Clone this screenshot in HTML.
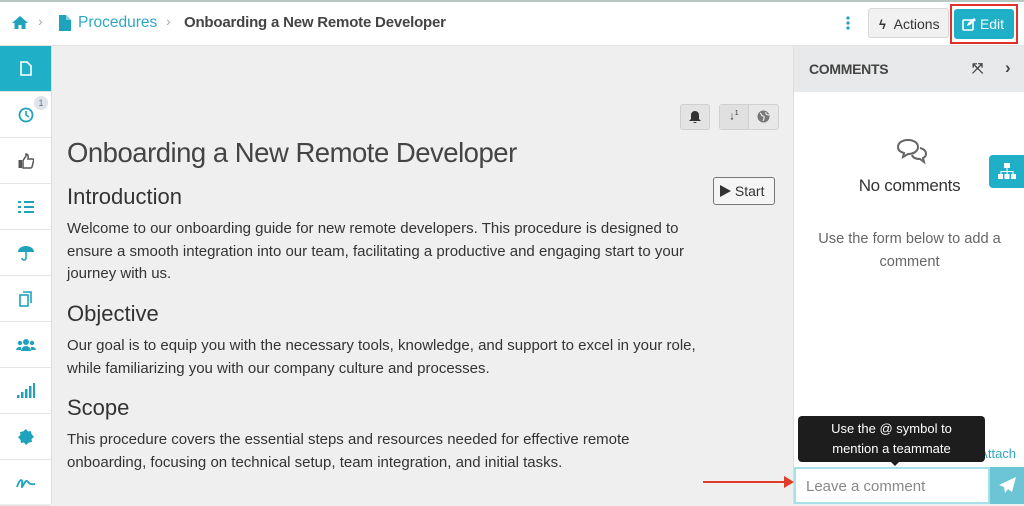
<!DOCTYPE html>
<html><head><meta charset="utf-8"><style>
*{margin:0;padding:0;box-sizing:border-box}
body{width:1024px;height:504px;overflow:hidden;background:#efefef;font-family:"Liberation Sans",sans-serif;color:#444;position:relative}
.top{position:absolute;left:0;top:0;width:1024px;height:46px;background:#fff;border-top:2px solid #b9c9c2;border-bottom:1px solid #e2e2e2}
.side{position:absolute;left:0;top:46px;width:52px;height:458px;background:#fff;border-right:1px solid #ddd}
.side div{height:46px;border-bottom:1px solid #e4e4e4;display:flex;align-items:center;justify-content:center;position:relative}
.side div.act{background:#1fb0c8}
.c{position:absolute;left:793px;top:46px;width:231px;height:458px;background:#fff;border-left:1px solid #ddd}
.ch{height:46px;background:#e8e9ea;display:flex;align-items:center;padding-left:15px;font-size:14px;font-weight:bold;color:#444;letter-spacing:-0.3px}
p{font-size:15px;line-height:22.5px;color:#333}
h2{font-weight:normal;font-size:22px;color:#333;position:absolute;left:67px}
</style></head><body>
<div class="top">
 <svg style="position:absolute;left:11px;top:13px" width="18" height="15" viewBox="0 0 18 15"><path d="M9 1L1 8h2.5v6h4v-4h3v4h4V8H17z" fill="#1fa3bd"/></svg>
 <span style="position:absolute;left:38px;top:11px;color:#aaa;font-size:14px">›</span>
 <svg style="position:absolute;left:59px;top:13px" width="12" height="16" viewBox="0 0 12 16"><path d="M0 0h7l5 5v11H0z" fill="#1fa3bd"/><path d="M7 0v5h5" fill="#7fd0df"/></svg>
 <span style="position:absolute;left:78px;top:12px;font-size:15.5px;color:#2fa8c2">Procedures</span>
 <span style="position:absolute;left:166px;top:11px;color:#aaa;font-size:14px">›</span>
 <span style="position:absolute;left:184px;top:12px;font-size:15px;font-weight:bold;color:#444;letter-spacing:-0.2px">Onboarding a New Remote Developer</span>
 <svg style="position:absolute;left:846px;top:14px" width="4" height="14"><circle cx="2" cy="2" r="1.6" fill="#1fa3bd"/><circle cx="2" cy="7" r="1.6" fill="#1fa3bd"/><circle cx="2" cy="12" r="1.6" fill="#1fa3bd"/></svg>
 <div style="position:absolute;left:868px;top:6px;width:81px;height:30px;background:#f1f1f1;border:1px solid #d8d8d8;border-radius:3px;font-size:14px;color:#333;padding:7px 0 0 10px"><b style="font-size:13px">ϟ</b>&nbsp; Actions</div>
 <div style="position:absolute;left:950px;top:2px;width:68px;height:40px;border:2px solid #e0302a"></div>
 <div style="position:absolute;left:954px;top:7px;width:60px;height:30px;background:#1fb0c8;border-radius:3px;color:#fff;font-size:14px;padding:7px 0 0 8px">
 <svg width="14" height="13" viewBox="0 0 14 13" style="vertical-align:-2px"><rect x="1" y="2" width="10" height="10" rx="1" fill="none" stroke="#fff" stroke-width="1.6"/><path d="M5 8l1-3 6-5 2 2-6 5z" fill="#fff"/></svg> Edit</div>
</div>
<div class="side">
 <div class="act"><svg width="12" height="15"><path d="M1 1h6l4 4v9H1z" fill="none" stroke="#fff" stroke-width="1.6"/></svg></div>
 <div><svg width="16" height="16"><circle cx="8" cy="8" r="6.5" fill="none" stroke="#1fa3bd" stroke-width="1.8"/><path d="M8 4v4l3 2" fill="none" stroke="#1fa3bd" stroke-width="1.6"/></svg><span style="position:absolute;left:34px;top:4px;width:14px;height:14px;border-radius:7px;background:#dde4ea;font-size:9px;color:#678;text-align:center;line-height:14px">1</span></div>
 <div><svg width="16" height="16" viewBox="0 0 16 16"><rect x="0.5" y="7" width="3.5" height="8" fill="#555"/><path d="M5 7.5l3-4.5V1c2 0 2.5 2 2 5h4.5c1 0 1.5 1 1 2l-1.5 6c-.3.7-.8 1-1.5 1H5z" fill="none" stroke="#555" stroke-width="1.5"/></svg></div>
 <div><svg width="16" height="14"><g fill="#1fa3bd"><rect x="6" y="1" width="10" height="2"/><rect x="6" y="6" width="10" height="2"/><rect x="6" y="11" width="10" height="2"/><rect x="0" y="1" width="3" height="2"/><rect x="0" y="6" width="3" height="2"/><rect x="0" y="11" width="3" height="2"/></g></svg></div>
 <div><svg width="18" height="16"><path d="M1 7a8 6 0 0 1 16 0z" fill="#1fa3bd"/><path d="M9 7v6a2 2 0 0 1-4 0" fill="none" stroke="#1fa3bd" stroke-width="1.6"/></svg></div>
 <div><svg width="14" height="16"><rect x="1" y="4" width="8" height="11" fill="none" stroke="#1fa3bd" stroke-width="1.6"/><path d="M4 1h8v11" fill="none" stroke="#1fa3bd" stroke-width="1.6"/></svg></div>
 <div><svg width="20" height="14"><g fill="#1fa3bd"><circle cx="10" cy="4" r="3"/><circle cx="4" cy="5" r="2.2"/><circle cx="16" cy="5" r="2.2"/><path d="M5 13a5 5 0 0 1 10 0z"/><path d="M0 12a4 4 0 0 1 5-3v3z"/><path d="M20 12a4 4 0 0 0-5-3v3z"/></g></svg></div>
 <div><svg width="18" height="16"><g fill="#1fa3bd"><rect x="0" y="12" width="2.5" height="3"/><rect x="4" y="9" width="2.5" height="6"/><rect x="8" y="6" width="2.5" height="9"/><rect x="12" y="3" width="2.5" height="12"/><rect x="16" y="0" width="2" height="15"/></g></svg></div>
 <div><svg width="16" height="16"><path d="M8 0l2 2.5 3-.5.5 3L16 8l-2.5 2 .5 3-3 .5L8 16l-2-2.5-3 .5-.5-3L0 8l2.5-2L2 3l3-.5z" fill="#1fa3bd"/></svg></div>
 <div><svg width="20" height="12"><path d="M1 10c3-9 6-9 5-2s3-6 5-4 3 4 8 3" fill="none" stroke="#1fa3bd" stroke-width="1.8"/></svg></div>
</div>
<div style="position:absolute;left:680px;top:104px;width:30px;height:26px;background:#e3e3e3;border:1px solid #d0d0d0;border-radius:3px;text-align:center;padding-top:5px"><svg width="12" height="13"><path d="M6 1a4 4 0 0 1 4 4v4l2 2H0l2-2V5a4 4 0 0 1 4-4zM4.5 12h3a1.5 1.5 0 0 1-3 0z" fill="#333"/></svg></div>
<div style="position:absolute;left:719px;top:104px;width:60px;height:26px;background:#e8e8e8;border:1px solid #d0d0d0;border-radius:3px"><div style="position:absolute;left:0;top:0;width:29px;height:24px;border-right:1px solid #d0d0d0;background:#e0e0e0;font-size:11px;text-align:center;padding-top:5px;color:#333"><b>↓</b><sup style="font-size:7px">1</sup></div><svg style="position:absolute;left:37px;top:5px" width="13" height="13"><circle cx="6.5" cy="6.5" r="6" fill="#777"/><path d="M3 3c2 1 1 3 3 3s1 3 0 5M9 2c-1 2 1 3 3 3" stroke="#e8e8e8" fill="none" stroke-width="1.2"/></svg></div>
<div style="position:absolute;left:67px;top:137px;font-size:27.5px;color:#444;letter-spacing:-0.5px">Onboarding a New Remote Developer</div>
<div style="position:absolute;left:713px;top:177px;width:62px;height:28px;border:1px solid #777;border-radius:3px;background:#f5f5f5;font-size:14px;color:#333;padding:5px 0 0 6px"><svg width="11" height="12" style="vertical-align:-1px"><path d="M0 0l11 6-11 6z" fill="#333"/></svg> Start</div>
<h2 style="top:184px">Introduction</h2>
<p style="position:absolute;left:67px;top:218px;width:640px">Welcome to our onboarding guide for new remote developers. This procedure is designed to ensure a smooth integration into our team, facilitating a productive and engaging start to your journey with us.</p>
<h2 style="top:301px">Objective</h2>
<p style="position:absolute;left:67px;top:335px;width:660px">Our goal is to equip you with the necessary tools, knowledge, and support to excel in your role, while familiarizing you with our company culture and processes.</p>
<h2 style="top:395px">Scope</h2>
<p style="position:absolute;left:67px;top:429px;width:620px">This procedure covers the essential steps and resources needed for effective remote onboarding, focusing on technical setup, team integration, and initial tasks.</p>
<div class="c">
 <div class="ch">COMMENTS<span style="position:absolute;left:178px;top:14px;font-size:14px;color:#444">⤧</span><span style="position:absolute;left:211px;top:12px;font-size:17px;color:#444">›</span></div>
 <svg style="position:absolute;left:102px;top:92px" width="32" height="28"><path d="M12 2c6 0 10 3 10 7s-4 7-10 7l-5 3 1-4C4 14 2 12 2 9c0-4 4-7 10-7z" fill="#fff" stroke="#666" stroke-width="2"/><path d="M24 10c4 1 6 3 6 6 0 2-1 3-3 4l1 4-4-3c-4 0-7-1-8-4" fill="none" stroke="#666" stroke-width="2"/></svg>
 <div style="position:absolute;left:0;width:231px;top:130px;text-align:center;font-size:17px;color:#333;letter-spacing:-0.3px">No comments</div>
 <div style="position:absolute;left:0;width:231px;top:182px;text-align:center;font-size:14.6px;line-height:22.5px;color:#666">Use the form below to add a<br>comment</div>
 <div style="position:absolute;left:8px;top:403px;font-size:13px;color:#777">☐ Hide deleted</div>
 <div style="position:absolute;left:170px;top:400px;font-size:13px;color:#2fa8c2">▣ Attach</div>
 <div style="position:absolute;left:4px;top:370px;width:187px;height:46px;background:#1d1d1d;border-radius:4px;color:#fff;font-size:13px;text-align:center;line-height:20px;padding-top:3px">Use the @ symbol to<br>mention a teammate</div>
 <div style="position:absolute;left:95px;top:414px;width:0;height:0;border:6px solid transparent;border-top-color:#1d1d1d"></div>
 <div style="position:absolute;left:0;top:421px;width:196px;height:37px;border:2px solid #a8e0ea;background:#fff;font-size:15px;color:#888;padding:9px 0 0 10px">Leave a comment</div>
 <div style="position:absolute;left:196px;top:421px;width:35px;height:37px;background:#6cc5d5;text-align:center;padding-top:10px"><svg width="17" height="16"><path d="M17 0L0 8l5 2 1 6 3-4 4 3z" fill="#fff"/></svg></div>
</div>
<div style="position:absolute;left:703px;top:481px;width:85px;height:2px;background:#e23b2a"></div>
<div style="position:absolute;left:784px;top:476px;border:6px solid transparent;border-left:10px solid #e23b2a"></div>
<div style="position:absolute;left:989px;top:155px;width:35px;height:33px;background:#1fb0c8;border-radius:4px 0 0 4px;text-align:center;padding-top:8px"><svg width="18" height="16"><g fill="#fff"><rect x="6" y="0" width="6" height="5"/><rect x="0" y="11" width="5" height="5"/><rect x="6.5" y="11" width="5" height="5"/><rect x="13" y="11" width="5" height="5"/><path d="M8.5 5h1v3h6v3h-1V9h-5v2h-1V9h-5v2h-1V8h6z"/></g></svg></div>
</body></html>
